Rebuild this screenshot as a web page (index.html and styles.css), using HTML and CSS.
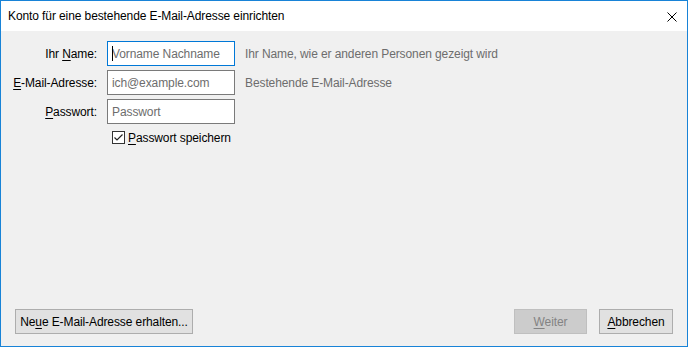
FILE: index.html
```html
<!DOCTYPE html>
<html lang="de">
<head>
<meta charset="utf-8">
<title>Konto einrichten</title>
<link rel="stylesheet" href="styles.css">
</head>
<body>
<div class="window">
  <div class="titlebar">
    <span class="title">Konto für eine bestehende E-Mail-Adresse einrichten</span>
    <svg class="close" width="10" height="10" viewBox="0 0 10 10"><path d="M0.5 0.5 L9.5 9.5 M9.5 0.5 L0.5 9.5" stroke="#000" stroke-width="1" fill="none"/></svg>
  </div>
  <div class="content">
    <div class="form">
      <label class="label">Ihr <u>N</u>ame:</label>
      <div class="field focused"><span class="caret"></span><span class="ph">Vorname Nachname</span></div>
      <span class="hint">Ihr Name, wie er anderen Personen gezeigt wird</span>

      <label class="label"><u>E</u>-Mail-Adresse:</label>
      <div class="field"><span class="ph">ich@example.com</span></div>
      <span class="hint">Bestehende E-Mail-Adresse</span>

      <label class="label"><u>P</u>asswort:</label>
      <div class="field"><span class="ph">Passwort</span></div>
      <span class="hint"></span>

      <span></span>
      <div class="check-row">
        <span class="checkbox"><svg width="11" height="11" viewBox="0 0 11 11"><path d="M1.5 5.5 L4 8 L9.5 2.5" stroke="#222" stroke-width="1.2" fill="none"/></svg></span>
        <span class="check-label"><u>P</u>asswort speichern</span>
      </div>
      <span></span>
    </div>
    <div class="buttons">
      <button class="btn wide">Ne<u>u</u>e E-Mail-Adresse erhalten...</button>
      <div class="spacer"></div>
      <button class="btn disabled"><u>W</u>eiter</button>
      <button class="btn cancel"><u>A</u>bbrechen</button>
    </div>
  </div>
</div>
</body>
</html>
```

FILE: styles.css
```css
* { box-sizing: border-box; }
html, body { margin: 0; padding: 0; background: #f0f0f0; }
body {
  font-family: "Liberation Sans", Arial, sans-serif;
  font-size: 12px;
  color: #000;
}
.window {
  width: 688px;
  height: 347px;
  border: 1px solid #1883d7;
  display: flex;
  flex-direction: column;
  background: #f0f0f0;
}
.titlebar {
  height: 30px;
  background: #fff;
  display: flex;
  align-items: center;
  justify-content: space-between;
  padding: 0 10px 0 7px;
}
.title { font-size: 12px; letter-spacing: -0.1px; }
.close { display: block; margin-top: 1px; }
.content {
  flex: 1;
  display: flex;
  flex-direction: column;
  justify-content: space-between;
  padding: 10px 14px 12px 0;
}
.form {
  display: grid;
  grid-template-columns: 96px 128px 1fr;
  column-gap: 10px;
  row-gap: 4px;
  grid-auto-rows: 25px;
  align-items: center;
  letter-spacing: -0.1px;
}
.label { text-align: right; }
.label u, .check-label u, .btn u { text-decoration: underline; text-underline-offset: 2px; }
.field {
  height: 25px;
  border: 1px solid #7a7a7a;
  background: #fff;
  display: flex;
  align-items: center;
  padding-left: 4px;
  position: relative;
}
.field.focused { border-color: #0078d7; }
.ph { color: #6d6d6d; white-space: nowrap; }
.caret {
  position: absolute;
  left: 4px;
  top: 4px;
  width: 1px;
  height: 15px;
  background: #000;
}
.hint { color: #6d6d6d; }
.check-row {
  display: flex;
  align-items: center;
  padding-left: 5px;
  height: 21px;
  margin-top: -6px;
}
.checkbox {
  width: 13px;
  height: 13px;
  border: 1px solid #333;
  background: #fff;
  display: flex;
  align-items: center;
  justify-content: center;
  margin-right: 3px;
}
.checkbox svg { display: block; }
.buttons {
  display: flex;
  gap: 12px;
  padding-left: 14px;
}
.spacer { flex: 1; }
.btn {
  font-family: inherit;
  font-size: 12px;
  height: 25px;
  background: #e1e1e1;
  border: 1px solid #adadad;
  color: #000;
  padding: 0 2px;
  margin: 0;
  white-space: nowrap;
  letter-spacing: -0.1px;
}
.btn.wide { width: 178px; }
.btn.disabled {
  width: 73px;
  background: #cccccc;
  border-color: #bfbfbf;
  color: #838383;
}
.btn.cancel { width: 74px; }
```
